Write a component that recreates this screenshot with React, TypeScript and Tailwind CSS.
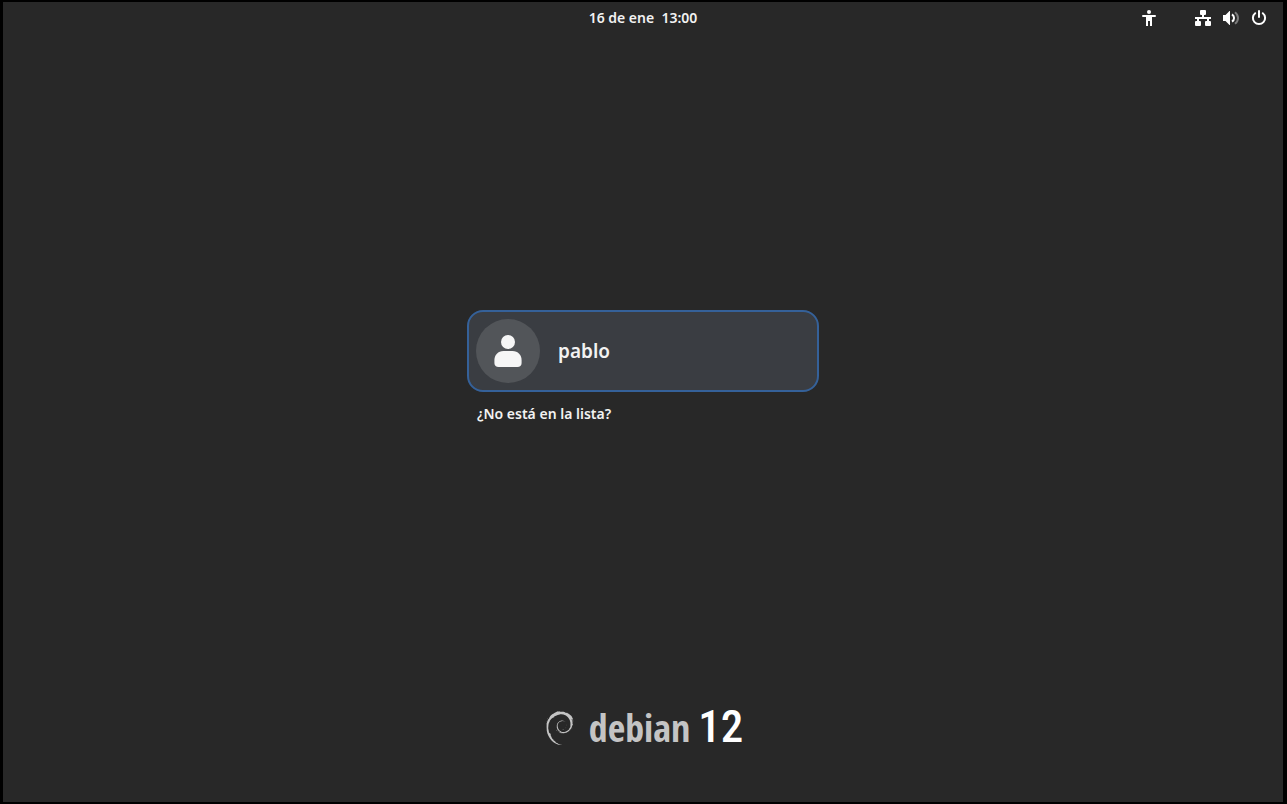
import { SiDebian } from "react-icons/si";

function AccessibilityIcon() {
  return (
    <svg viewBox="0 0 16 16" className="size-4" fill="currentColor" aria-hidden="true">
      <circle cx="8" cy="2" r="2" />
      <path d="M2 5h12a1 1 0 0 1 0 2h-3v9H9v-5H7v5H5V7H2a1 1 0 0 1 0-2z" />
    </svg>
  );
}

function NetworkIcon() {
  return (
    <svg viewBox="0 0 16 16" className="size-4" fill="currentColor" aria-hidden="true">
      <rect x="5" y="0" width="6" height="5" rx="1" />
      <rect x="0" y="11" width="6" height="5" rx="1" />
      <rect x="10" y="11" width="6" height="5" rx="1" />
      <path d="M7 4h2v3h7v2h-2v3h-2V9H4v3H2V9H0V7h7z" />
    </svg>
  );
}

function VolumeIcon() {
  return (
    <svg viewBox="0 0 16 16" className="size-4" fill="none" aria-hidden="true">
      <path d="M0 5h2.500L6 1.500C6.300 1.100 6.600 1 7 1v14c-.4 0-.7-.1-1-.5L2.500 11H0z" fill="currentColor" />
      <path d="M9 4.300c2.700 1.800 2.700 5.600 0 7.400" stroke="currentColor" strokeWidth="2" />
      <path d="M12 2.200c4 3.200 4 8.400 0 11.600" stroke="#7d7d7d" strokeWidth="2" />
    </svg>
  );
}

function PowerIcon() {
  return (
    <svg viewBox="0 0 16 16" className="size-4" fill="none" stroke="currentColor" strokeWidth="2" strokeLinecap="round" aria-hidden="true">
      <path d="M8 1v6M4.200 3.200a6.100 6.100 0 1 0 7.600 0" />
    </svg>
  );
}

function UserIcon() {
  return (
    <svg viewBox="0 0 32 32" className="size-8" fill="currentColor" aria-hidden="true">
      <circle cx="16" cy="7" r="7" />
      <path d="M11.500 16h9c5.500 0 9.100 4 9.100 9v3c0 2.600-1.700 4-4.100 4h-19c-2.400 0-4.100-1.400-4.100-4v-3c0-5 3.600-9 9.100-9z" />
    </svg>
  );
}

function TopBar() {
  return (
    <header className="grid h-8 grid-cols-3 items-center px-4">
      <time className="col-start-2 justify-self-center whitespace-pre">16 de ene  13:00</time>
      <div className="flex items-center gap-[38px] justify-self-end text-white">
        <button type="button" aria-label="Accesibilidad">
          <AccessibilityIcon />
        </button>
        <button type="button" aria-label="Sistema" className="flex items-center gap-3">
          <NetworkIcon />
          <VolumeIcon />
          <PowerIcon />
        </button>
      </div>
    </header>
  );
}

export default function App() {
  return (
    <div className="flex min-h-screen flex-col border-y-2 border-r-4 border-l-3 border-black bg-[#282828] font-['Noto_Sans',sans-serif] text-sm leading-5 font-semibold text-[#f2f2f2]">
      <TopBar />
      <main className="flex flex-1 flex-col items-center justify-center px-4">
        <div className="flex w-full max-w-[352px] flex-col items-start gap-3">
          <button
            type="button"
            className="flex w-full items-center gap-[18px] rounded-2xl border-2 border-[#356199] bg-[#3a3d42] p-[7px] text-[19px] leading-7"
          >
            <span className="flex size-16 items-center justify-center rounded-full bg-[#525559] text-[#f6f6f6]">
              <UserIcon />
            </span>
            pablo
          </button>
          <button type="button" className="px-[10px]">
            ¿No está en la lista?
          </button>
        </div>
      </main>
      <footer className="flex h-[102px] items-start justify-center">
        <div className="flex h-14 items-center">
          <SiDebian className="mr-3 size-[34px] text-[#c4c4c4]" aria-hidden="true" />
          <p className="flex items-baseline gap-2 pb-1 leading-none">
            <span className="font-['Open_Sans_Condensed',sans-serif] text-[38px] font-bold text-[#c4c4c4]">debian</span>
            <span className="font-['Roboto_Condensed',sans-serif] text-[45px] font-medium text-white">12</span>
          </p>
        </div>
      </footer>
    </div>
  );
}
